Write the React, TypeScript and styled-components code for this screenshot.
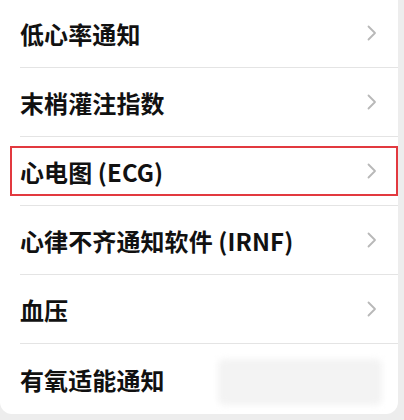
import React from "react";
import styled, { createGlobalStyle } from "styled-components";

const GlobalStyle = createGlobalStyle`
  html, body {
    margin: 0;
    padding: 0;
    background: #ededed;
  }
  body {
    font-family: "Noto Sans CJK SC", "Noto Sans", sans-serif;
  }
`;

type RowItem = {
  title: string;
  highlighted?: boolean;
  blurred?: boolean;
};

const items: RowItem[] = [
  { title: "低心率通知" },
  { title: "末梢灌注指数" },
  { title: "心电图 (ECG)", highlighted: true },
  { title: "心律不齐通知软件 (IRNF)" },
  { title: "血压" },
  { title: "有氧适能通知", blurred: true },
];

const Page = styled.div`
  width: 404px;
  height: 420px;
  overflow: hidden;
`;

const Card = styled.div`
  width: 398px;
  margin-top: -1px;
  background: #ffffff;
  border-radius: 0 0 12px 12px;
  padding-left: 20px;
  box-sizing: border-box;
`;

const Row = styled.div<{ last?: boolean }>`
  position: relative;
  display: flex;
  align-items: center;
  border-bottom: ${({ last }) => (last ? "none" : "1px solid #e4e4e4")};
  padding-right: 20px;
  height: ${({ last }) => (last ? "70px" : "68px")};
`;

const Title = styled.span`
  flex: 1;
  font-size: 24px;
  font-weight: 600;
  color: #111111;
  letter-spacing: 0.1px;
  white-space: nowrap;
`;

const Chevron = styled.svg`
  width: 12px;
  height: 16px;
  flex-shrink: 0;
`;

/* red annotation box drawn over the ECG row */
const Highlight = styled.div`
  position: absolute;
  left: -10px;
  right: 0;
  top: 9px;
  bottom: 9px;
  border: 2px solid #e2393f;
  pointer-events: none;
`;

const Blur = styled.div`
  width: 164px;
  height: 46px;
  margin-right: -4px;
  margin-top: 6px;
  background: #f3f3f3;
  border-radius: 6px;
  filter: blur(3px);
`;

const ChevronIcon = () => (
  <Chevron viewBox="0 0 12 16">
    <path
      d="M2.5 1.5 L9 8 L2.5 14.5"
      fill="none"
      stroke="#b8b8b8"
      strokeWidth="1.8"
      strokeLinecap="round"
      strokeLinejoin="round"
    />
  </Chevron>
);

const App = () => {
  return (
    <Page>
      <GlobalStyle />
      <Card>
        {items.map((item, i) => (
          <Row key={item.title} last={i === items.length - 1}>
            <Title>{item.title}</Title>
            {item.blurred ? <Blur /> : <ChevronIcon />}
            {item.highlighted && <Highlight />}
          </Row>
        ))}
      </Card>
    </Page>
  );
};

export default App;
